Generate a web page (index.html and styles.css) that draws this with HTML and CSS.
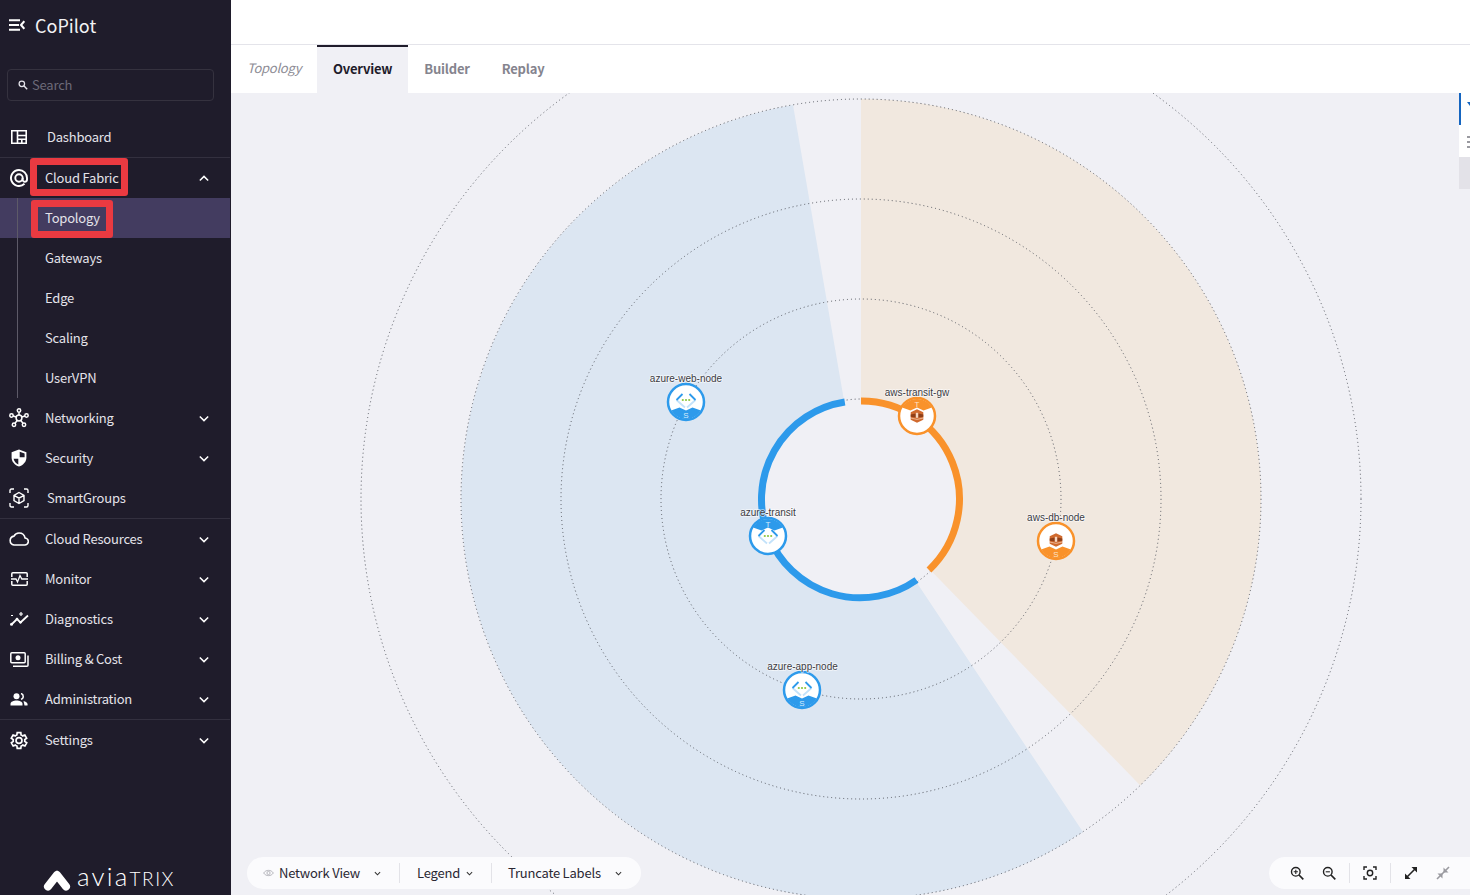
FILE: index.html
```html
<!DOCTYPE html>
<html lang="en">
<head>
<meta charset="utf-8">
<title>CoPilot</title>
<link rel="stylesheet" href="styles.css">
</head>
<body>
<div class="app">
  <aside class="sidebar">
    <header class="brand">
      <svg class="menu-ico" viewBox="0 0 16 12" width="16" height="12"><path d="M0 1.200h11M0 6h10M0 10.800h11M15.300 2.200 12 6l3.300 3.800" fill="none" stroke="#fff" stroke-width="2"/></svg>
      <span class="brand-name">CoPilot</span>
    </header>
    <div class="search">
      <svg viewBox="0 0 12 12" width="10" height="10"><circle cx="4.600" cy="4.600" r="3.300" fill="none" stroke="#e4e3ea" stroke-width="1.500"/><path d="m7 7 4 4" stroke="#e4e3ea" stroke-width="1.700"/></svg>
      <span class="search-text">Search</span>
    </div>
    <nav class="nav">
      <a class="row wide sep"><span class="ico"><svg viewBox="0 0 16 14" width="16" height="14"><path d="M.8.8h14.400v12.400H.8zM6.500.8v12.400M6.500 5.500h8.700M6.500 9.200h8.700M10.800 9.200v4" fill="none" stroke="#fff" stroke-width="1.600"/></svg></span><span class="txt">Dashboard</span></a>
      <a class="row"><span class="ico"><svg viewBox="0 0 18 18" width="18" height="18"><g fill="none" stroke="#fff" stroke-width="1.900"><path d="M9 1a8 8 0 1 0 5.500 13.800"/><path d="M9 1a8 8 0 0 1 8 8v1.500a2.200 2.200 0 0 1-4.400 0V9"/><circle cx="9" cy="9" r="3.700"/></g></svg></span><span class="txt">Cloud Fabric</span><svg class="chev" viewBox="0 0 12 8" width="10" height="7"><path d="M1 6.500 6 1.500l5 5" fill="none" stroke="#fff" stroke-width="1.800"/></svg><i class="mark mark-cf"></i></a>
      <div class="sublist">
        <a class="row sub active"><span class="txt">Topology</span><i class="mark mark-tp"></i></a>
        <a class="row sub"><span class="txt">Gateways</span></a>
        <a class="row sub"><span class="txt">Edge</span></a>
        <a class="row sub"><span class="txt">Scaling</span></a>
        <a class="row sub"><span class="txt">UserVPN</span></a>
      </div>
      <a class="row"><span class="ico"><svg viewBox="0 0 20 20" width="20" height="20"><g fill="none" stroke="#fff" stroke-width="1.500"><circle cx="10" cy="10" r="2.900"/><circle cx="10" cy="2.500" r="1.700"/><circle cx="2.500" cy="7.500" r="1.700"/><circle cx="17.500" cy="7.500" r="1.700"/><circle cx="5" cy="16.800" r="1.700"/><circle cx="15" cy="16.800" r="1.700"/><path d="M10 4.200v3M4.100 8l3.200 1M15.900 8l-3.200 1M6 15.300l2.400-3M14 15.300l-2.400-3"/></g></svg></span><span class="txt">Networking</span><svg class="chev" viewBox="0 0 12 8" width="10" height="7"><path d="M1 1.500 6 6.500l5-5" fill="none" stroke="#fff" stroke-width="1.800"/></svg></a>
      <a class="row"><span class="ico"><svg viewBox="0 0 16 18" width="16" height="18"><path d="M8 .5 .6 3.200v5.300c0 4.200 3.200 7.800 7.400 9 4.200-1.200 7.400-4.800 7.400-9V3.200z" fill="#fff"/><path d="M8.700 2.800 13.600 4.600v3.700H8.700zM7.300 9.700H2.600c.4 2.600 2.400 4.700 4.700 5.700z" fill="#1f1c2b"/></svg></span><span class="txt">Security</span><svg class="chev" viewBox="0 0 12 8" width="10" height="7"><path d="M1 1.500 6 6.500l5-5" fill="none" stroke="#fff" stroke-width="1.800"/></svg></a>
      <a class="row wide sep"><span class="ico"><svg viewBox="0 0 20 20" width="20" height="20"><g fill="none" stroke="#fff" stroke-width="1.400"><path d="M1 5V2.500Q1 1 2.500 1H5M15 1h2.500Q19 1 19 2.500V5M19 15v2.500q0 1.500-1.500 1.500H15M5 19H2.500Q1 19 1 17.500V15"/><path d="m10 4.500 5 2.800v5.400l-5 2.800-5-2.800V7.300zM5 7.300l5 2.900 5-2.900M10 10.200v5.300"/></g></svg></span><span class="txt">SmartGroups</span></a>
      <a class="row"><span class="ico"><svg viewBox="0 0 20 14" width="20" height="14"><path d="M5 13h10.500a3.500 3.500 0 0 0 .6-7C15.500 3 13 1 10 1 7.800 1 5.900 2.200 5 4.100A4.500 4.500 0 0 0 5 13Z" fill="none" stroke="#fff" stroke-width="1.600"/></svg></span><span class="txt">Cloud Resources</span><svg class="chev" viewBox="0 0 12 8" width="10" height="7"><path d="M1 1.500 6 6.500l5-5" fill="none" stroke="#fff" stroke-width="1.800"/></svg></a>
      <a class="row"><span class="ico"><svg viewBox="0 0 17 14" width="17" height="14"><path d="M.8 5V1.800q0-1 1-1h13.400q1 0 1 1V5M.8 9v3.200q0 1 1 1h13.400q1 0 1-1V9" fill="none" stroke="#fff" stroke-width="1.500"/><path d="M0 7h5l1.500 3L9 3.500 10.800 7H17" fill="none" stroke="#fff" stroke-width="1.300"/></svg></span><span class="txt">Monitor</span><svg class="chev" viewBox="0 0 12 8" width="10" height="7"><path d="M1 1.500 6 6.500l5-5" fill="none" stroke="#fff" stroke-width="1.800"/></svg></a>
      <a class="row"><span class="ico"><svg viewBox="0 0 19 14" width="19" height="14"><path d="M1.500 12.500 7 7l3.500 3.500L18 3.500" fill="none" stroke="#fff" stroke-width="1.800"/><circle cx="1.500" cy="12.300" r="1.500" fill="#fff"/><circle cx="7" cy="7" r="1.300" fill="#fff"/><circle cx="10.500" cy="10.300" r="1.300" fill="#fff"/><path d="M11 0v4M9 2h4M1 3.500h2" stroke="#fff" stroke-width="1.200"/></svg></span><span class="txt">Diagnostics</span><svg class="chev" viewBox="0 0 12 8" width="10" height="7"><path d="M1 1.500 6 6.500l5-5" fill="none" stroke="#fff" stroke-width="1.800"/></svg></a>
      <a class="row"><span class="ico"><svg viewBox="0 0 19 15" width="19" height="15"><rect x=".8" y=".8" width="14.400" height="10" rx="1" fill="none" stroke="#fff" stroke-width="1.500"/><circle cx="8" cy="5.800" r="2.500" fill="#fff"/><path d="M18 3.500v9.700q0 1-1 1H3" fill="none" stroke="#fff" stroke-width="1.500"/></svg></span><span class="txt">Billing &amp; Cost</span><svg class="chev" viewBox="0 0 12 8" width="10" height="7"><path d="M1 1.500 6 6.500l5-5" fill="none" stroke="#fff" stroke-width="1.800"/></svg></a>
      <a class="row sep"><span class="ico"><svg viewBox="0 0 18 13" width="18" height="13"><circle cx="6.500" cy="3.300" r="3" fill="#fff"/><path d="M.5 12.500V11c0-2.200 3-3.400 6-3.400s6 1.200 6 3.400v1.500z" fill="#fff"/><path d="M11 .5a3 3 0 0 1 0 5.800" fill="none" stroke="#fff" stroke-width="1.500"/><path d="M13.500 8c2 .5 4 1.500 4 3.200v1.300h-3" fill="#fff"/></svg></span><span class="txt">Administration</span><svg class="chev" viewBox="0 0 12 8" width="10" height="7"><path d="M1 1.500 6 6.500l5-5" fill="none" stroke="#fff" stroke-width="1.800"/></svg></a>
      <a class="row"><span class="ico"><svg viewBox="2 1.500 20 21" width="18" height="19"><path d="M19.400 13a7.600 7.600 0 0 0 0-2l2.100-1.600-2-3.500-2.500 1a7.500 7.500 0 0 0-1.700-1L15 3.300h-4l-.4 2.600a7.500 7.500 0 0 0-1.700 1l-2.500-1-2 3.500L6.600 11a7.600 7.600 0 0 0 0 2l-2.100 1.600 2 3.500 2.500-1a7.500 7.500 0 0 0 1.700 1l.3 2.600h4l.4-2.600a7.500 7.500 0 0 0 1.700-1l2.500 1 2-3.500z" transform="translate(-1)" fill="none" stroke="#fff" stroke-width="1.900"/><circle cx="12" cy="12" r="3.300" fill="none" stroke="#fff" stroke-width="1.900"/></svg></span><span class="txt">Settings</span><svg class="chev" viewBox="0 0 12 8" width="10" height="7"><path d="M1 1.500 6 6.500l5-5" fill="none" stroke="#fff" stroke-width="1.800"/></svg></a>
    </nav>
    <footer class="logo">
      <svg class="logo-mark" viewBox="0 0 28 21" width="28" height="21"><path d="M14 5 5 16.500M14 5l9 11.500" fill="none" stroke="#fff" stroke-width="8" stroke-linecap="round"/></svg>
      <span class="wordmark">avia<b>trix</b></span>
    </footer>
  </aside>
  <main class="main">
    <div class="topbar"></div>
    <div class="tabs">
      <span class="tab-title">Topology</span>
      <a class="tab on">Overview</a>
      <a class="tab">Builder</a>
      <a class="tab">Replay</a>
    </div>
    <section class="canvas">
      <svg class="graph" viewBox="231 93 1239 802" width="1239" height="802">
        <defs>
          <g id="azure-glyph">
            <path d="M-9.500 0-1 7.500M9.500 0 1 7.500" fill="none" stroke="#c3e2fa" stroke-width="1.800"/>
            <path d="M-3.500-6-9.500 0M3.500-6 9.500 0" fill="none" stroke="#2d9aeb" stroke-width="1.800"/>
            <circle cx="-3.200" r="1.100" fill="#8cc63f"/><circle r="1.100" fill="#8cc63f"/><circle cx="3.200" r="1.100" fill="#8cc63f"/>
          </g>
          <g id="aws-glyph">
            <path d="M0-6.800 6.300-3.800V3.800L0 6.800-6.300 3.800V-3.800Z" fill="#d06a2e"/>
            <path d="M-6.300-1.400-1.200-2.600V1.600L-6.300 .8ZM6.300-1.400 1.200-2.600V1.600L6.300 .8Z" fill="#8f3f18"/>
            <path d="M-1.200-3.200h2.400v5h-2.400z" fill="#f6d7c2"/>
            <path d="M-6.300 2 0 3.400 6.300 2" fill="none" stroke="#f3c7a8" stroke-width=".8"/>
          </g>
          <clipPath id="node-clip"><circle r="17"/></clipPath>
          <g id="azure-s">
            <circle r="18" fill="#fff" stroke="#2d9aeb" stroke-width="2.500"/>
            <path d="M-18 9.500-6.500 5.500 0 8.500 6.500 5.500 18 9.500V18H-18Z" fill="#2d9aeb" clip-path="url(#node-clip)"/>
            <use href="#azure-glyph" y="-2"/>
            <text class="cap" y="15.500" fill="#d8ecfb">S</text>
          </g>
          <g id="azure-t">
            <circle r="18" fill="#fff" stroke="#2d9aeb" stroke-width="2.500"/>
            <path d="M-18-9.500-6.500-5.500 0-8.500 6.500-5.500 18-9.500V-18H-18Z" fill="#2d9aeb" clip-path="url(#node-clip)"/>
            <use href="#azure-glyph" y="0"/>
            <text class="cap" y="-9.500" fill="#d8ecfb">T</text>
          </g>
          <g id="aws-t">
            <circle r="18" fill="#fff" stroke="#f9922b" stroke-width="2.500"/>
            <path d="M-18-9.500-6.500-5.500 0-8.500 6.500-5.500 18-9.500V-18H-18Z" fill="#f9922b" clip-path="url(#node-clip)"/>
            <use href="#aws-glyph" y="0"/>
            <text class="cap" y="-9.500" fill="#fde3c8">T</text>
          </g>
          <g id="aws-s">
            <circle r="18" fill="#fff" stroke="#f9922b" stroke-width="2.500"/>
            <path d="M-18 9.500-6.500 5.500 0 8.500 6.500 5.500 18 9.500V18H-18Z" fill="#f9922b" clip-path="url(#node-clip)"/>
            <use href="#aws-glyph" y="-1"/>
            <text class="cap" y="15.500" fill="#fde3c8">S</text>
          </g>
        </defs>
        <path d="M861 99A400 400 0 0 1 1140.300 785.400L930.800 570.600A100 100 0 0 0 861 399Z" fill="#f1e8df"/>
        <path d="M1083 832A400 400 0 1 1 793 105L844 400.500A100 100 0 1 0 916.500 582.200Z" fill="#dce6f2"/>
        <g class="orbit">
          <circle cx="861" cy="499" r="100"/>
          <circle cx="861" cy="499" r="200"/>
          <circle cx="861" cy="499" r="300"/>
          <circle cx="861" cy="499" r="400"/>
          <circle cx="861" cy="499" r="500"/>
        </g>
        <path d="M861 401A98 98 0 0 1 929 570" fill="none" stroke="#f9922b" stroke-width="7"/>
        <path d="M916.500 580A98.500 98.500 0 1 1 844.800 402" fill="none" stroke="#2d9aeb" stroke-width="7"/>
        <use href="#azure-s" x="686" y="402"/>
        <use href="#aws-t" x="917" y="416"/>
        <use href="#azure-t" x="768" y="536"/>
        <use href="#aws-s" x="1056" y="541"/>
        <use href="#azure-s" x="802" y="690"/>
        <text class="lbl" x="686" y="382">azure-web-node</text>
        <text class="lbl" x="917" y="396">aws-transit-gw</text>
        <text class="lbl" x="768" y="516">azure-transit</text>
        <text class="lbl" x="1056" y="520.500">aws-db-node</text>
        <text class="lbl" x="802.500" y="670">azure-app-node</text>
      </svg>
      <div class="side-panel">
        <div class="side-a"><svg viewBox="0 0 6 4" width="6" height="4"><path d="M0 0h6L3 4z" fill="#1565c0"/></svg></div>
        <div class="side-b"><i></i><i></i><i></i></div>
        <div class="side-c"></div>
      </div>
      <div class="pill pill-left">
        <span class="pill-item first"><svg viewBox="0 0 14 10" width="11" height="8"><path d="M.8 5C3.800.5 10.200.5 13.200 5 10.200 9.500 3.800 9.500.8 5Z" fill="none" stroke="#a6a6ad" stroke-width="1"/><circle cx="7" cy="5" r="2" fill="none" stroke="#a6a6ad"/></svg><span class="pill-text">Network View</span><svg class="mini mini-f" viewBox="0 0 8 5" width="7" height="5"><path d="m1 1 3 3 3-3" fill="none" stroke="#333" stroke-width="1.200"/></svg></span>
        <span class="pill-item second"><span class="pill-text">Legend</span><svg class="mini" viewBox="0 0 8 5" width="7" height="5"><path d="m1 1 3 3 3-3" fill="none" stroke="#333" stroke-width="1.200"/></svg></span>
        <span class="pill-item third"><span class="pill-text">Truncate Labels</span><svg class="mini mini-a" viewBox="0 0 8 5" width="7" height="5"><path d="m1 1 3 3 3-3" fill="none" stroke="#333" stroke-width="1.200"/></svg></span>
      </div>
      <div class="pill pill-right">
        <span class="tool"><svg viewBox="0 0 14 14" width="14" height="14"><circle cx="5.800" cy="5.800" r="4.300" fill="none" stroke="#222" stroke-width="1.400"/><path d="m9 9 4.300 4.300" stroke="#222" stroke-width="1.700"/><path d="M3.700 5.800h4.200M5.800 3.700v4.200" stroke="#222" stroke-width="1.100"/></svg></span>
        <span class="tool tool-b"><svg viewBox="0 0 14 14" width="14" height="14"><circle cx="5.800" cy="5.800" r="4.300" fill="none" stroke="#222" stroke-width="1.400"/><path d="m9 9 4.300 4.300" stroke="#222" stroke-width="1.700"/><path d="M3.700 5.800h4.200" stroke="#222" stroke-width="1.100"/></svg></span>
        <span class="tool split"><svg viewBox="0 0 14 14" width="14" height="14"><path d="M1 4V1h3M10 1h3v3M13 10v3h-3M4 13H1v-3" fill="none" stroke="#222" stroke-width="1.400"/><circle cx="7" cy="7" r="2.700" fill="none" stroke="#222" stroke-width="1.400"/></svg></span>
        <span class="tool split"><svg viewBox="0 0 14 14" width="14" height="14"><path d="M3 11 11 3" stroke="#222" stroke-width="1.600"/><path d="M7.500 1H13v5.500zM6.500 13H1V7.500z" fill="#222"/></svg></span>
        <span class="tool tool-e"><svg viewBox="0 0 14 14" width="14" height="14"><path d="M1 13 13 1" stroke="#9a9aa0" stroke-width="1.600"/><path d="M7.500 6.500V1.500L12.500 6.500zM6.500 7.500H1.500L6.500 12.500z" fill="#9a9aa0"/></svg></span>
      </div>
    </section>
  </main>
</div>
</body>
</html>
```
FILE: styles.css
```css
* { box-sizing: border-box; }
html, body { margin: 0; height: 100%; overflow: hidden; }
body { font-family: "Noto Sans CJK SC", "Noto Sans", sans-serif; font-size: 13px; letter-spacing: -.2px; color: #1f1c2b; background: #fff; }
.app { display: flex; width: 1470px; height: 895px; }

.sidebar { width: 231px; flex: none; background: #1f1c2b; color: #e4e3ea; display: flex; flex-direction: column; padding-right: 1px; }
.brand { display: flex; align-items: center; height: 50px; padding-left: 9px; gap: 10px; }
.brand-name { font-size: 18px; color: #f2f2f5; letter-spacing: 0; margin-top: -1px; }
.search { display: flex; align-items: center; gap: 4px; height: 32px; margin: 19px 16px 16px 7px; padding-left: 10px; border: 1px solid #35323f; border-radius: 4px; color: #6c6a78; }
.search-text { margin-top: -2px; }
.nav { display: flex; flex-direction: column; }
.row { position: relative; display: flex; align-items: center; height: 40px; flex: none; color: #e4e3ea; }
.txt { margin-top: -2px; }
.row.sep { height: 41px; border-bottom: 1px solid #33303f; }
.ico { width: 38px; margin-right: 7px; display: flex; justify-content: center; }
.row.wide .ico { margin-right: 9px; }
.chev { margin-left: auto; margin-right: 21px; }
.sublist { position: relative; }
.sublist::before { content: ""; position: absolute; left: 17px; top: 0; bottom: 0; width: 1px; background: #5d5a68; z-index: 1; }
.sub { padding-left: 45px; }
.sub.active { background: #433c60; }
.mark { position: absolute; border: 7px solid #ea3a41; border-radius: 3px; }
.mark-cf { left: 30px; top: 0; width: 98px; height: 38px; }
.mark-tp { left: 31px; top: 2px; width: 82px; height: 38px; }

.logo { margin-top: auto; display: flex; align-items: center; gap: 6px; padding-left: 43px; height: 32px; }
.logo-mark { margin-top: 3px; }
.wordmark { font-family: Lato, sans-serif; font-weight: 300; font-size: 26px; line-height: 20px; color: #fff; letter-spacing: 2.200px; margin-top: -4px; }
.wordmark b { font-weight: 300; font-size: 19px; text-transform: uppercase; letter-spacing: 1.500px; }

.main { flex: 1; min-width: 0; display: flex; flex-direction: column; }
.topbar { height: 45px; flex: none; border-bottom: 1px solid #e4e4ea; }
.tabs { display: flex; align-items: stretch; height: 48px; flex: none; padding-left: 16px; font-weight: 700; color: #85848e; }
.tab-title { display: flex; align-items: center; width: 70px; padding-bottom: 4px; font-weight: 400; font-style: italic; letter-spacing: -.3px; color: #8d8c95; }
.tab { display: flex; align-items: center; padding: 0 16px 4px; border-top: 2px solid transparent; }
.tab.on { background: #f0f0f5; color: #1f1c2b; border-top-color: #1f1c2b; }

.canvas { position: relative; flex: 1; min-height: 0; overflow: hidden; background: #f0f0f5; }
.graph { display: block; }
.orbit circle { fill: none; stroke: #555860; stroke-width: 1; stroke-dasharray: 1 3; }
.lbl { font-family: "Liberation Sans", sans-serif; font-size: 10px; letter-spacing: 0; text-anchor: middle; fill: #3c3c44; stroke: #fff; stroke-opacity: .65; stroke-width: 1.500px; paint-order: stroke; }
.cap { font-family: "Liberation Sans", sans-serif; font-size: 8px; letter-spacing: 0; text-anchor: middle; }

.side-panel { position: absolute; right: 0; top: 0; width: 11px; }
.side-a { height: 32px; background: #fff; border-left: 2px solid #1565c0; padding: 9px 0 0 6px; overflow: hidden; }
.side-a svg { display: block; }
.side-b { height: 32px; background: #fff; padding: 11px 0 0 8px; display: flex; flex-direction: column; gap: 3px; }
.side-b i { width: 3px; height: 2px; background: #9a9aa0; }
.side-c { height: 32px; background: #e3e2e8; }

.pill { position: absolute; bottom: 6px; height: 32px; background: #fbfbfd; display: flex; align-items: center; }
.pill-left { left: 16px; width: 394px; border-radius: 16px; color: #2a2833; }
.pill-right { right: 0; width: 201px; border-radius: 16px 0 0 16px; padding-left: 12px; }
.pill-item { display: flex; align-items: center; height: 20px; }
.pill-text { margin-top: -2px; }
.pill-item.first { padding-left: 16px; gap: 5px; width: 152px; }
.pill-item.second { width: 92px; padding-left: 17px; border-left: 1px solid #e3e3e8; }
.pill-item.third { padding-left: 16px; border-left: 1px solid #e3e3e8; }
.mini { margin-left: 6px; }
.mini-a { margin-left: 14px; }
.mini-f { margin-left: 9px; }
.tool { display: flex; align-items: center; justify-content: center; width: 32px; height: 20px; }
.tool-b { margin-right: 4px; }
.tool-e { margin-left: -4px; }
.tool.split { width: 41px; border-left: 1px solid #e3e3e8; }
```
